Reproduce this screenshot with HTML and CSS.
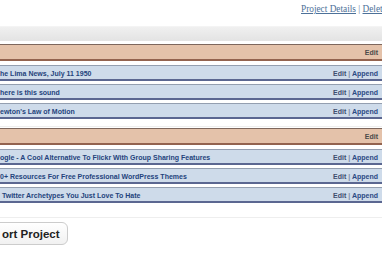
FILE: index.html
```html
<!DOCTYPE html>
<html>
<head>
<meta charset="utf-8">
<link rel="stylesheet" href="styles.css">
</head>
<body>
<div class="page">
  <div class="toplinks"><a href="#">Project Details</a> | <a href="#">Delet</a></div>
  <div class="graybar"></div>

  <div class="group">
    <div class="ghead"><span class="act">Edit</span></div>
    <div class="row"><span class="title">he Lima News, July 11 1950</span><span class="acts"><a class="e">Edit</a> | <a class="a">Append</a></span></div>
    <div class="row"><span class="title">here is this sound</span><span class="acts"><a class="e">Edit</a> | <a class="a">Append</a></span></div>
    <div class="row"><span class="title">ewton's Law of Motion</span><span class="acts"><a class="e">Edit</a> | <a class="a">Append</a></span></div>
  </div>

  <div class="group last">
    <div class="ghead"><span class="act">Edit</span></div>
    <div class="row"><span class="title">ogle - A Cool Alternative To Flickr With Group Sharing Features</span><span class="acts"><a class="e">Edit</a> | <a class="a">Append</a></span></div>
    <div class="row"><span class="title">0+ Resources For Free Professional WordPress Themes</span><span class="acts"><a class="e">Edit</a> | <a class="a">Append</a></span></div>
    <div class="row"><span class="title">&nbsp;Twitter Archetypes You Just Love To Hate</span><span class="acts"><a class="e">Edit</a> | <a class="a">Append</a></span></div>
  </div>

  <div class="actions"><button class="btn">ort Project</button></div>
</div>
</body>
</html>
```
FILE: styles.css
```css
html, body { margin: 0; padding: 0; background: #fff; }
body { width: 382px; height: 255px; overflow: hidden; }
.page { width: 382px; }

.toplinks {
  height: 26px;
  padding-left: 301px;
  box-sizing: border-box;
  padding-top: 3px;
  white-space: nowrap;
  font-family: "Liberation Serif", "Times New Roman", serif;
  font-size: 9.3px;
  line-height: 12px;
  color: #5a7896;
}
.toplinks a { color: #4d7199; text-decoration: underline; }

.graybar {
  height: 15px;
  background: linear-gradient(#f0f0f0, #e3e3e3);
  border-top: 1px solid #f4f4f4;
  box-sizing: border-box;
}

.group {
  margin-top: 3px;
  border-bottom: 1px solid #eeeeee;
  padding-bottom: 7px;
}
.group + .group { margin-top: 1px; }
.group.last { padding-bottom: 14px; }

.ghead {
  height: 14px;
  background: #e4c2aa;
  border-top: 1px solid #7d675d;
  border-bottom: 2px solid #93634f;
  display: flex;
  justify-content: flex-end;
  align-items: center;
  padding-right: 4px;
  margin-bottom: 4px;
  font-family: "Liberation Sans", Arial, sans-serif;
  font-size: 7px;
  font-weight: bold;
  color: #4a4a4a;
}

.row {
  height: 13px;
  background: #cedbea;
  border-top: 1px solid #949fb0;
  border-bottom: 2px solid #5b6791;
  margin-bottom: 3px;
  display: flex;
  justify-content: space-between;
  align-items: center;
  padding-right: 4px;
  font-family: "Liberation Sans", Arial, sans-serif;
  font-size: 7px;
  font-weight: bold;
  color: #24437c;
  white-space: nowrap;
}
.row:last-child { margin-bottom: 0; }
.title { padding-top: 1px; }
.acts { color: #7d8aa0; padding-top: 1px; }
.acts .e { color: #3e4e6e; }
.acts .a { color: #2c4a84; }

.actions {
  padding-top: 4px;
}
.btn {
  margin-left: -6px;
  height: 23px;
  padding: 0 7px 0 7px;
  border: 1px solid #cccccc;
  border-radius: 6px;
  background: linear-gradient(#ffffff, #f1f1f1);
  font-family: "Liberation Sans", Arial, sans-serif;
  font-size: 11.5px;
  font-weight: bold;
  color: #222;
}
```
